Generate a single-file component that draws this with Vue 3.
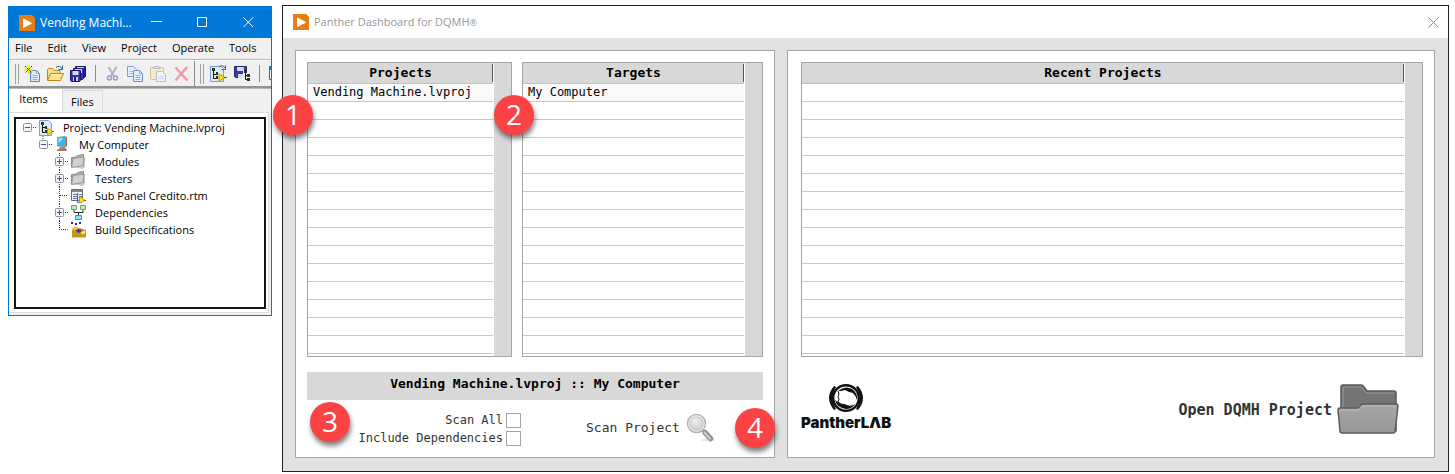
<script setup>
import { ref } from 'vue'

const menus = ['File', 'Edit', 'View', 'Project', 'Operate', 'Tools', 'Window']
const rows = 15
const projects = ['Vending Machine.lvproj']
const targets = ['My Computer']
const scanAll = ref(false)
const includeDeps = ref(false)

const tree = [
  { depth: 0, label: 'Project: Vending Machine.lvproj', icon: 'project', box: '-', line: '' },
  { depth: 1, label: 'My Computer', icon: 'computer', box: '-', line: 'M27 0v4' },
  { depth: 2, label: 'Modules', icon: 'folder', box: '+', line: 'M43.500 0v17' },
  { depth: 2, label: 'Testers', icon: 'folder', box: '+', line: 'M43.500 0v17' },
  { depth: 2, label: 'Sub Panel Credito.rtm', icon: 'menu', box: '', line: 'M43.500 0v17M44 8.500h8' },
  { depth: 2, label: 'Dependencies', icon: 'deps', box: '+', line: 'M43.500 0v17' },
  { depth: 2, label: 'Build Specifications', icon: 'build', box: '', line: 'M43.500 0v8.500h8' },
]
const guideWidth = (d) => 22 + d * 16
const boxX = (d) => 7 + d * 16
</script>

<template>
  <main class="desk">
    <section class="explorer" aria-label="Project Explorer">
      <header class="ex-title">
        <svg class="app-icon" viewBox="0 0 16 16" aria-hidden="true">
          <path d="M0 0h13l3 3v13H0z" fill="#e87d12" />
          <path d="M4.500 4v8.500l8-4.200z" fill="#fff" stroke="#fff" stroke-linejoin="round" />
        </svg>
        <span class="ex-name">Vending Machi...</span>
        <button type="button" aria-label="Minimize">
          <svg viewBox="0 0 11 11"><path d="M0 4.500h11" /></svg>
        </button>
        <button type="button" aria-label="Maximize">
          <svg viewBox="0 0 11 11"><path d="M.5.5h9v9h-9z" /></svg>
        </button>
        <button type="button" aria-label="Close">
          <svg viewBox="0 0 11 11"><path d="M.5.5l9.500 9.500M10 .5L.5 10" /></svg>
        </button>
      </header>

      <nav class="menubar">
        <button v-for="m in menus" :key="m" type="button">{{ m }}</button>
      </nav>

      <div class="toolbars">
        <div class="toolbar">
          <span class="grip"></span>
          <button type="button" aria-label="New">
            <svg viewBox="0 0 17 17">
              <path d="M6.500 5.500h6l3 3v8h-9z" fill="#dbe9fb" stroke="#5b84c4" />
              <path d="M12.500 5.500v3h3M8.500 10.500h5M8.500 12.500h5M8.500 14.500h5" fill="none" stroke="#8fb0e4" />
              <path d="M4.500 0v9M0 4.500h9" stroke="#f4ec00" stroke-width="2" />
              <path d="M1 1l7 7M8 1L1 8" stroke="#222" stroke-dasharray="1.500 1" />
            </svg>
          </button>
          <button type="button" aria-label="Open">
            <svg viewBox="0 0 17 17">
              <path d="M.5 15V4.500l1-1h4l1.500 2h6v3" fill="#f7df86" stroke="#b98a1a" />
              <path d="M.5 15.500l3-7h13l-3 7z" fill="#ffe48a" stroke="#b98a1a" />
              <path d="M4 9.500h11" stroke="#fff6c4" />
              <path d="M9 2.500q4-3 6 1.500M15.500.500V4.500h-4" fill="none" stroke="#1d7192" />
            </svg>
          </button>
          <button type="button" aria-label="Save all">
            <svg viewBox="0 0 17 17">
              <path d="M5.500 1.500h10v10l-1 1h-9z" fill="#2525a5" stroke="#17176e" />
              <path d="M7 2h7v4H7z" fill="#d5d9e8" />
              <path d="M3.500 3.500h10v10l-1 1h-9z" fill="#3737ba" stroke="#17176e" />
              <path d="M5 4h7v4H5z" fill="#d5d9e8" />
              <path d="M.5 5.500h10v10l-1 1h-8l-1-1z" fill="#3030a8" stroke="#17176e" />
              <path d="M2.500 6h6v4h-6zM3 12h5v4H3z" fill="#d5d9e8" />
              <path d="M4 12h2v4H4z" fill="#17176e" />
            </svg>
          </button>
          <span class="sep"></span>
          <button type="button" aria-label="Cut" class="dim">
            <svg viewBox="0 0 17 17" fill="none">
              <path d="M4.500 2l5.500 9M12.500 2L7 11" stroke="#88898e" stroke-width="2" />
              <circle cx="5.500" cy="13" r="2" stroke="#526dbb" stroke-width="1.500" />
              <circle cx="11.500" cy="13" r="2" stroke="#526dbb" stroke-width="1.500" />
            </svg>
          </button>
          <button type="button" aria-label="Copy">
            <svg viewBox="0 0 17 17">
              <path d="M.5 1.500h6l3 3v7h-9z" fill="#e5effc" stroke="#7c9ed1" />
              <path d="M2.500 6.500h5M2.500 8.500h4" stroke="#9cbae5" />
              <path d="M6.500 5.500h6l3 3v8h-9z" fill="#e5effc" stroke="#6f94cc" />
              <path d="M12.500 5.500v3h3M8.500 10.500h5M8.500 12.500h5M8.500 14.500h5" fill="none" stroke="#8fb0e4" />
            </svg>
          </button>
          <button type="button" aria-label="Paste" class="dim">
            <svg viewBox="0 0 17 17">
              <rect x=".5" y="2.500" width="13" height="12" rx="1" fill="#f5e8a7" stroke="#b89d56" />
              <path d="M4 3.500l1-2h4l1 2z" fill="#ddd" stroke="#999" />
              <path d="M6.500 6.500h6l3 3v7h-9z" fill="#f3f7fe" stroke="#86a3ce" />
              <path d="M8.500 11.500h5M8.500 13.500h5" stroke="#a7c1e9" />
            </svg>
          </button>
          <button type="button" aria-label="Delete">
            <svg viewBox="0 0 17 17">
              <path d="M2.500 2.500l12 13M14 2L2.500 15.500" stroke="#f09aa5" stroke-width="2.500" />
            </svg>
          </button>
        </div>
        <div class="toolbar second">
          <span class="grip"></span>
          <button type="button" aria-label="Project tree">
            <svg viewBox="0 0 17 17">
              <path d="M.5 1.500h11l2 2v13H.5z" fill="#dce9fa" stroke="#7a9cd0" />
              <path d="M3.500 5v8.500h4M3.500 9.500h4" fill="none" stroke="#111" />
              <path d="M2 3h3v3H2zM6 7h2v3H6zM6 11h2v3H6z" fill="#283818" />
              <path d="M9 9l6 3.500-6 3.500z" fill="#ffe600" stroke="#c39b00" />
              <path d="M14 12.500h3" stroke="#d02020" />
              <path d="M9 2q4-3 6 1M15.500.5v4h-4" fill="none" stroke="#1d7192" />
            </svg>
          </button>
          <button type="button" aria-label="Save project">
            <svg viewBox="0 0 17 17">
              <path d="M.5 1.500h12v11H1.500l-1-1z" fill="#3a3a9c" stroke="#26266e" />
              <path d="M3 2h7v4H3zM4 9h5v4H4z" fill="#d5d9e8" />
              <path d="M9 6h8v11H9z" fill="#f0f0f0" />
              <path d="M11.500 7v7.500h3M11.500 10.500h3" fill="none" stroke="#111" />
              <path d="M10 5h3v3h-3zM13 9h3v3h-3zM13 13h3v3h-3z" fill="#283828" />
            </svg>
          </button>
          <span class="sep"></span>
          <button type="button" aria-label="Properties">
            <svg viewBox="0 0 17 17">
              <path d="M.5 1.500h15v13H.5z" fill="#fff" stroke="#1767bd" />
              <path d="M1 2h14v3H1z" fill="#1f7ad8" />
              <path d="M3 8h4v3H3z" fill="#e05a20" />
            </svg>
          </button>
        </div>
      </div>

      <div class="tabs">
        <button type="button" class="tab on">Items</button>
        <button type="button" class="tab">Files</button>
      </div>

      <div class="pane">
        <ul class="tree">
          <li v-for="n in tree" :key="n.label">
            <svg class="guide" :width="guideWidth(n.depth)" height="17" aria-hidden="true">
              <path v-if="n.line" :d="n.line" fill="none" stroke="#333" stroke-dasharray="1 1" />
              <g v-if="n.box" :transform="`translate(${boxX(n.depth)} 4)`">
                <path d="M10 4.500h3" stroke="#333" stroke-dasharray="1 1" />
                <rect x=".5" y=".5" width="8" height="8" rx="1" fill="#f4f4f4" stroke="#919191" />
                <path d="M2 4.500h5" stroke="#3b54a5" />
                <path v-if="n.box === '+'" d="M4.500 2v5" stroke="#3b54a5" />
              </g>
            </svg>
            <svg class="node" viewBox="0 0 17 17" aria-hidden="true">
              <g v-if="n.icon === 'project'">
                <path d="M1.500 1.500h9l3 3v12h-12z" fill="#dde9fa" stroke="#7f9bd2" />
                <path d="M4.500 4v9.500h4M4.500 8.500h4" fill="none" stroke="#111" />
                <path d="M3 3h3v3H3zM7 7h2v3H7zM7 11h2v3H7z" fill="#2c3d20" />
                <path d="M9.500 9.500l5.500 3-5.500 3z" fill="#ffe600" stroke="#c39b00" />
                <path d="M14 12.500h2" stroke="#d02020" />
              </g>
              <g v-else-if="n.icon === 'computer'">
                <path d="M3.500 1.500l8-1v10l-8-.5z" fill="#36b5e8" stroke="#8b98a4" />
                <path d="M4.500 2.500l5-.6-5 5.600z" fill="#a9e6fa" />
                <path d="M12.500 1v9.500" fill="none" stroke="#b3623a" />
                <path d="M6 11h5l2 3H4z" fill="#8c8c94" />
                <path d="M3 13.500h9.500V15H3z" fill="#b3714f" />
              </g>
              <g v-else-if="n.icon === 'folder'">
                <path d="M2 14l11 2 2-2V4z" fill="#c9c9c9" />
                <path d="M1.500 14V4.500l5-.5 1-1.500 6-1v10z" fill="#b4b4b4" stroke="#8c8c8c" />
                <path d="M1.500 14.500l1.500-9 11-1.500-1 8.500z" fill="#d2d2d2" stroke="#959595" />
              </g>
              <g v-else-if="n.icon === 'menu'">
                <path d="M1.500 2.500h11v11h-11z" fill="#eceef4" stroke="#686868" />
                <path d="M2 3h10v2H2z" fill="#858585" />
                <path d="M3 7.500h4M3 9.500h4M3 11.500h4M9 7.500h3M9 9.500h3" stroke="#6b76a5" />
                <path d="M7.500 6v9.500h4" stroke="#4560bc" fill="none" />
                <path d="M9.500 10l5.500 3-5.500 3z" fill="#ffe600" stroke="#c39b00" />
                <path d="M14 13.500h2" stroke="#d02020" />
              </g>
              <g v-else-if="n.icon === 'deps'">
                <path d="M4 6v2.500h9V6M8.500 8v3" fill="none" stroke="#333" />
                <path d="M1.500 1.500h5v4h-5zM10.500 1.500h5v4h-5z" fill="#aeeeb8" stroke="#7b9a8b" />
                <path d="M5.500 11.500h6v4h-6z" fill="#7fe9f5" stroke="#5b8e98" />
              </g>
              <g v-else>
                <path d="M1 1h2v2H1zM5 2h2v2H5zM9 1h2v2H9z" fill="#2020e0" />
                <path d="M2 9l7-2 7 2v7.500H2z" fill="#c79612" />
                <path d="M1 8l5-3 4 3-4 2z" fill="#e8bf4a" />
                <path d="M5 9.500l4-2 4 2-4 2.500z" fill="#8b650b" />
                <path d="M8.500 8v4M6.500 10h4" stroke="#2020e0" />
                <path d="M11 11l4-1.500v3l-3 1z" fill="#f6e6a4" />
              </g>
            </svg>
            <span>{{ n.label }}</span>
          </li>
        </ul>
      </div>
    </section>

    <section class="dash" aria-label="Panther Dashboard">
      <header class="dash-title">
        <svg class="app-icon" viewBox="0 0 16 16" aria-hidden="true">
          <path d="M0 0h13l3 3v13H0z" fill="#e87d12" />
          <path d="M4.500 4v8.500l8-4.200z" fill="#fff" stroke="#fff" stroke-linejoin="round" />
        </svg>
        <span>Panther Dashboard for DQMH<small>®</small></span>
        <button type="button" aria-label="Close">
          <svg viewBox="0 0 11 11"><path d="M.5.5l10 10M10.500.5l-10 10" /></svg>
        </button>
      </header>

      <div class="dash-body">
        <div class="panel scan">
          <div class="lists">
            <div class="list">
              <table>
                <thead><tr><th>Projects</th></tr></thead>
                <tbody>
                  <tr v-for="i in rows" :key="i" :class="{ filled: projects[i - 1] }"><td>{{ projects[i - 1] }}</td></tr>
                </tbody>
              </table>
              <div class="scroll"></div>
              <span class="badge one">1</span>
            </div>
            <div class="list">
              <table>
                <thead><tr><th>Targets</th></tr></thead>
                <tbody>
                  <tr v-for="i in rows" :key="i" :class="{ filled: targets[i - 1] }"><td>{{ targets[i - 1] }}</td></tr>
                </tbody>
              </table>
              <div class="scroll"></div>
              <span class="badge two">2</span>
            </div>
          </div>
          <div class="band">Vending Machine.lvproj :: My Computer</div>
          <div class="actions">
            <div class="checks">
              <label>Scan All <input v-model="scanAll" type="checkbox" /></label>
              <label>Include Dependencies <input v-model="includeDeps" type="checkbox" /></label>
            </div>
            <button type="button" class="scan-btn">
              <span>Scan Project</span>
              <svg viewBox="0 0 30 30" aria-hidden="true">
                <defs>
                  <radialGradient id="lens" cx=".4" cy=".35" r=".7">
                    <stop offset="0" stop-color="#eeeeee" />
                    <stop offset="1" stop-color="#c6c6c6" />
                  </radialGradient>
                </defs>
                <ellipse cx="22" cy="27" rx="7" ry="1.500" fill="#e6e6e6" />
                <path d="M16 17l3 3" stroke="#a8a8a8" stroke-width="3" />
                <path d="M19 19.500l5.500 6" stroke="#8d8d8d" stroke-width="5.500" stroke-linecap="round" />
                <path d="M18.500 19.500l5.500 6" stroke="#cdcdcd" stroke-width="2.500" stroke-linecap="round" />
                <circle cx="10.500" cy="10.500" r="9" fill="url(#lens)" stroke="#b3b3b3" stroke-width="1.500" />
                <circle cx="10.500" cy="10.500" r="7.500" fill="none" stroke="#e9e9e9" stroke-width="1.500" />
                <circle cx="10.500" cy="10.500" r="6.500" fill="none" stroke="#b8b8b8" stroke-width=".7" />
              </svg>
            </button>
          </div>
          <span class="badge three">3</span>
          <span class="badge four">4</span>
        </div>

        <div class="panel recent">
          <div class="list">
            <table>
              <thead><tr><th>Recent Projects</th></tr></thead>
              <tbody><tr v-for="i in rows" :key="i"><td></td></tr></tbody>
            </table>
            <div class="scroll"></div>
          </div>
          <div class="foot">
            <div class="logo">
              <svg viewBox="0 0 36 30" aria-hidden="true">
                <path d="M6 3Q-4 15 6 27l2-1Q1 15 8 4zM30 3q10 12 0 24l-2-1q7-11 0-22z" fill="#111" />
                <circle cx="18" cy="15" r="12.800" fill="#fff" stroke="#111" stroke-width="2.400" />
                <path d="M10 8q7-6 14-2 6 4 5 11-1-4-4-7l-4-1-4-2-4 1z" fill="#111" />
                <path d="M10 8l1 3-1 3 1 2-1 3 3 2 5 1" fill="none" stroke="#111" />
                <path d="M7 17q2 8 11 9 6 0 9-5-4 3-8 1l-6-1z" fill="#111" />
              </svg>
              <span>PantherLΛB</span>
            </div>
            <button type="button" class="open-btn">
              <span>Open DQMH Project</span>
              <svg viewBox="0 0 62 52" aria-hidden="true">
                <defs>
                  <linearGradient id="front" x1="0" y1="0" x2="0" y2="1">
                    <stop offset="0" stop-color="#a6a6a6" />
                    <stop offset="1" stop-color="#989898" />
                  </linearGradient>
                </defs>
                <path d="M4 48V4q0-2 2-2h18q2 0 3 2l3 4h27q2 0 2 2v38z" fill="#747474" stroke="#5a5a5a" stroke-width="1.500" stroke-linejoin="round" />
                <path d="M6 24V6q0-2 2-2h15q2 0 3 2l3 4h28" fill="none" stroke="#999" />
                <path d="M1 27q0-2 2-2h17q2 0 3-2t3-2h33q2 0 2 2l-3 26q0 1-2 1H5q-2 0-2-2z" fill="url(#front)" stroke="#5c5c5c" stroke-width="1.500" stroke-linejoin="round" />
                <path d="M3 27h18q2 0 3-2t3-2h32" fill="none" stroke="#bababa" />
              </svg>
            </button>
          </div>
        </div>
      </div>
    </section>
  </main>
</template>

<style>
body { background: #fff; }
</style>

<style scoped>
* { box-sizing: border-box; }
button { border: 0; padding: 0; background: none; font: inherit; color: inherit; }
.desk {
  display: flex;
  align-items: flex-start;
  gap: 10px;
  padding: 5px 6px 2px 8px;
  font: 11px/17px "Open Sans", "Noto Sans", sans-serif;
  color: #000;
}
.app-icon { width: 16px; height: 16px; flex: none; }

.explorer {
  flex: 0 0 264px;
  margin-top: 1px;
  border: 1px solid #0078d7;
  background: #f0f0f0;
  overflow: hidden;
}
.ex-title {
  display: flex;
  align-items: center;
  height: 31px;
  padding-left: 10px;
  background: #0078d7;
  color: #fff;
  font-size: 12px;
}
.ex-name { flex: 1; min-width: 0; padding-left: 5px; white-space: nowrap; }
.ex-title button { flex: none; width: 46px; height: 31px; padding-bottom: 2px; }
.ex-title button:first-of-type { width: 45px; }
.ex-title svg { width: 11px; height: 11px; fill: none; stroke: #fff; vertical-align: middle; }
.ex-title .app-icon { width: 16px; height: 16px; stroke: none; }

.menubar { display: flex; gap: 15px; height: 22px; padding-left: 6px; overflow: hidden; }
.menubar button { flex: none; height: 19px; }

.toolbars {
  display: flex;
  height: 28px;
  border-top: 1px solid #fff;
  border-bottom: 2px solid #929292;
  outline: 1px solid #b8b8b8;
}
.toolbar { display: flex; flex: none; align-items: center; padding-left: 6px; }
.toolbar button { flex: none; width: 23px; height: 23px; display: grid; place-items: center; }
.toolbar svg { width: 17px; height: 17px; }
.second { border-left: 1px solid #8a8a8a; margin-left: 1px; padding-left: 5px; }
.second button { width: 24px; }
.grip { width: 4px; height: 20px; margin-right: 2px; border: solid #a0a0a0; border-width: 0 1px; }
.sep { flex: none; width: 1px; height: 17px; margin: 0 5px; background: #8c8c8c; }
.dim { opacity: .6; }

.tabs { display: flex; align-items: flex-end; height: 24px; }
.tab { height: 22px; padding: 0 8px 1px; border: 1px solid #dcdcdc; border-bottom: 0; }
.tab.on { width: 53px; height: 24px; padding: 0 4px 5px 0; background: #fff; border-color: #fff; }

.pane { margin: 0 2px 2px 0; padding: 4px 2px 3px 5px; background: #fff; border: solid #dcdcdc; border-width: 1px 1px 1px 0; }
.tree {
  min-height: 192px;
  margin: 0;
  padding: 0;
  list-style: none;
  border: 2px solid #151518;
}
.tree li { display: flex; align-items: center; height: 17px; }
.guide { flex: none; }
.node { flex: none; width: 17px; height: 17px; margin-right: 8px; }

.dash { flex: 1; min-width: 0; border: 1px solid #222; background: #e1e1e1; }
.dash-title {
  display: flex;
  align-items: center;
  gap: 5px;
  height: 32px;
  padding: 0 9px 0 10px;
  background: #fff;
  color: #999;
}
.dash-title button { width: 12px; height: 32px; padding-bottom: 3px; margin-left: auto; }
.dash-title button svg { width: 11px; height: 11px; fill: none; stroke: #888; vertical-align: middle; }
.dash-body { display: grid; grid-template-columns: 480fr 648fr; gap: 12px; padding: 12px 13px 13px 12px; }
.dash-body, .dash-body button { font-family: "DejaVu Sans Mono", "Liberation Mono", monospace; }
.panel { position: relative; min-width: 0; padding: 11px 11px 0; background: #fff; border: 1px solid #a5a5a5; }
.recent { padding-left: 13px; }

.lists { display: grid; grid-template-columns: 205fr 241fr; gap: 10px; }
.list { position: relative; display: flex; align-items: flex-start; min-width: 0; padding-bottom: 2px; border: 1px solid #a5a5a5; }
.list table { flex: 1; border-spacing: 0; table-layout: fixed; min-width: 0; }
.list th {
  height: 21px;
  padding: 0;
  background: #d8d8d8;
  border-bottom: 1px solid #c0c0c0;
  background-image: linear-gradient(#555, #555);
  background-repeat: no-repeat;
  background-size: 1px 18px;
  background-position: right 1px;
  font-size: 13px;
  line-height: 16px;
}
.list td { height: 18px; padding: 0 0 1px 5px; border-bottom: 1px solid #c8c8c8; font-size: 12px; line-height: 15px; white-space: nowrap; }
.filled td { background: #f9f9f9; }
.scroll { align-self: stretch; flex: none; width: 17px; margin: 0 0 -2px 1px; background: #d8d8d8; }

.band {
  margin-top: 15px;
  padding: 4px 0 8px;
  background: #d8d8d8;
  font-size: 13px;
  font-weight: bold;
  line-height: 16px;
  text-align: center;
}
.actions { display: flex; align-items: flex-start; height: 57px; padding-top: 13px; color: #333; }
.checks { display: flex; flex: 0 0 214px; flex-direction: column; align-items: flex-end; gap: 3px; }
.checks label { display: flex; align-items: center; gap: 3px; line-height: 15px; white-space: nowrap; font-size: 12px; }
.checks input { appearance: none; width: 15px; height: 15px; margin: 0; border: 1px solid #a5a5a5; background: #fff; }
.scan-btn { display: flex; align-items: center; gap: 6px; margin-left: 65px; font-size: 13px; white-space: nowrap; }
.scan-btn span { padding-bottom: 2px; }
.scan-btn svg { width: 30px; height: 30px; }

.foot { display: flex; justify-content: space-between; align-items: flex-start; padding: 26px 24px 0 0; }
.logo { display: flex; flex-direction: column; align-items: center; gap: 1px; font: 900 15px/18px Inter, "Open Sans", sans-serif; color: #111; }
.logo svg { width: 36px; height: 30px; }
.open-btn { display: flex; align-items: center; gap: 5px; color: #333; font-size: 15px; font-weight: bold; white-space: nowrap; }
.open-btn span { padding-top: 2px; }
.open-btn svg { width: 62px; height: 52px; }

.badge {
  position: absolute;
  z-index: 2;
  width: 40px;
  height: 40px;
  border-radius: 50%;
  background: #fb4346;
  color: #fff;
  font: 28px/38px "Open Sans", "Noto Sans", sans-serif;
  text-align: center;
  box-shadow: 1px 4px 5px rgba(0, 0, 0, .5);
}
.one { top: 32px; left: -35px; }
.two { top: 32px; left: -29px; }
.three { bottom: 15px; left: 14px; }
.four { bottom: 9px; right: -1px; }
</style>
